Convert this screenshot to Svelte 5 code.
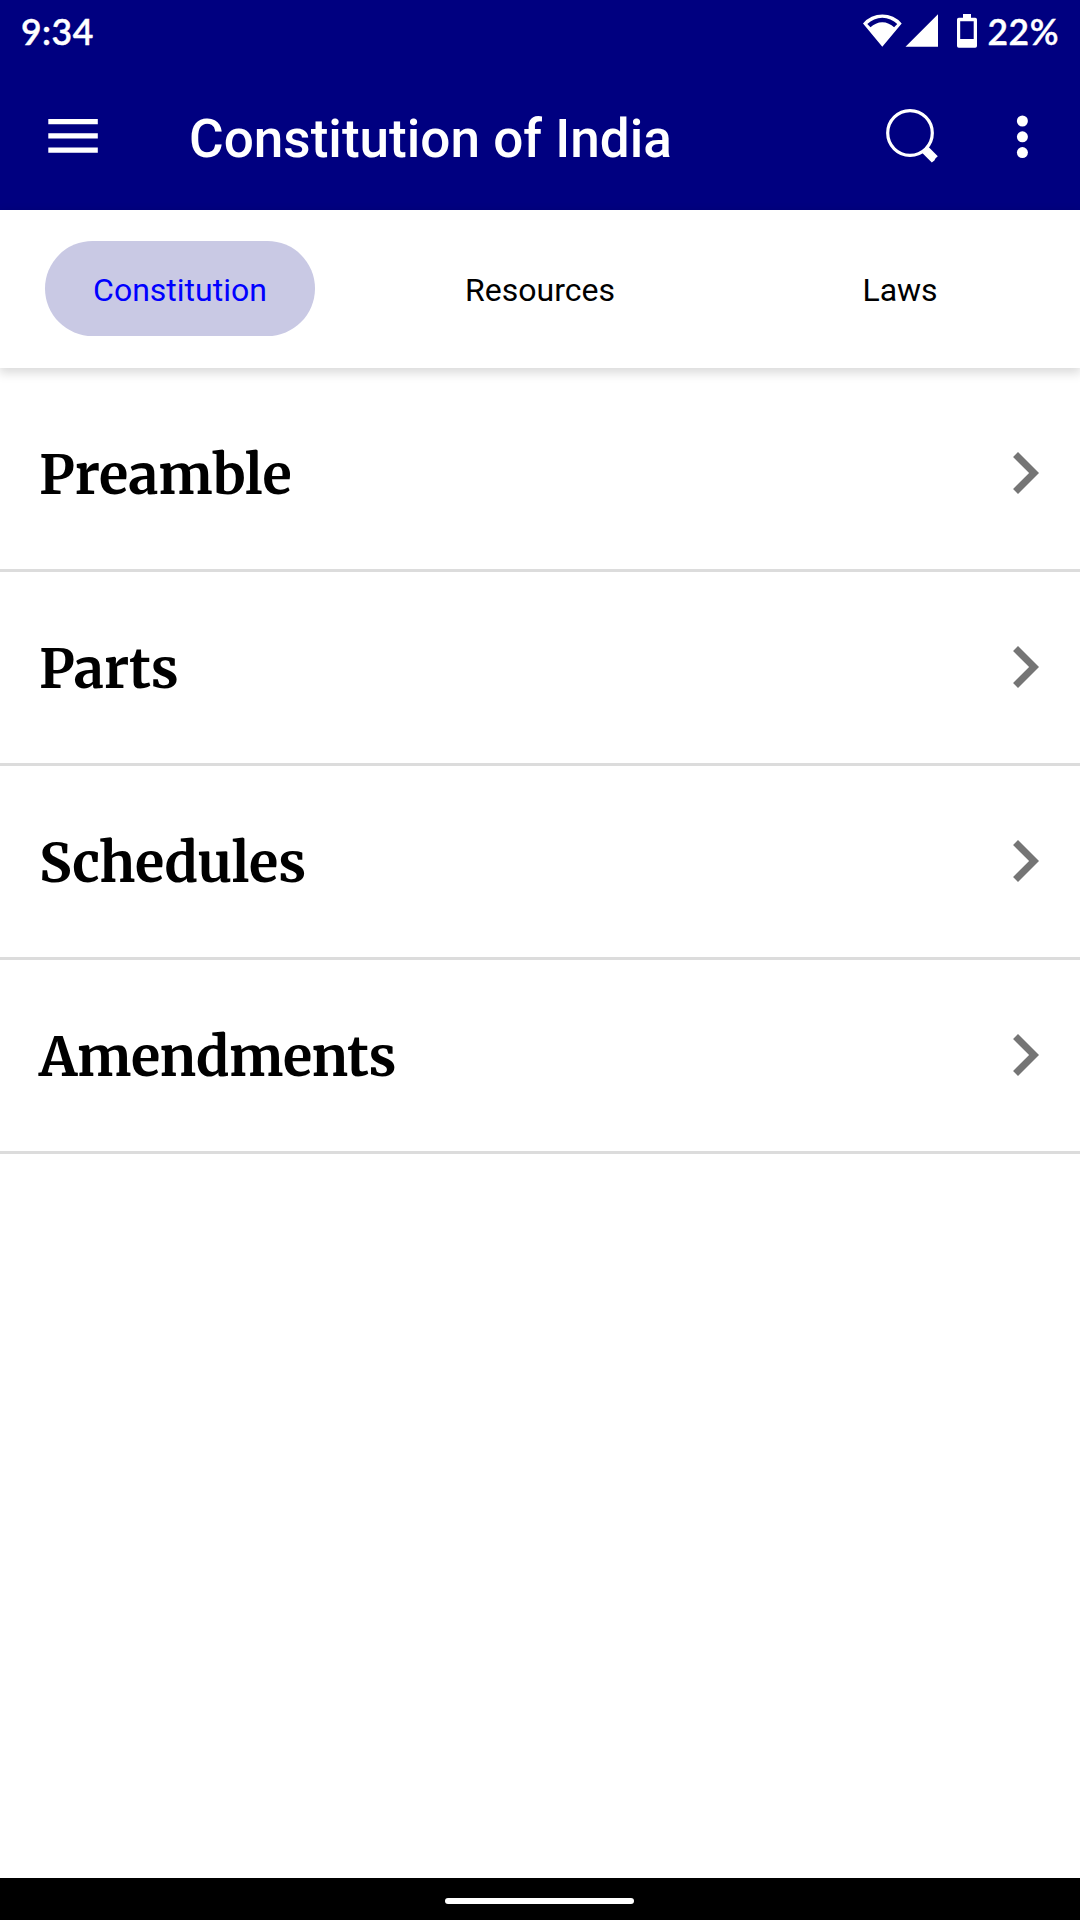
<script>
  let activeTab = 'Constitution';

  const tabs = ['Constitution', 'Resources', 'Laws'];

  const sections = [
    { id: 'preamble', title: 'Preamble' },
    { id: 'parts', title: 'Parts' },
    { id: 'schedules', title: 'Schedules' },
    { id: 'amendments', title: 'Amendments' }
  ];
</script>

<svelte:head>
  <title>Constitution of India</title>
</svelte:head>

<div class="screen">
  <header>
    <!-- Status bar -->
    <div class="status-bar">
      <span class="clock">9:34</span>
      <div class="status-icons">
        <svg width="44" height="44" viewBox="0 0 44 44">
          <path
            fill="#fff"
            fill-rule="evenodd"
            d="M3 13.4A25.3 25.3 0 0 1 41.7 13.4L22.3 36.8ZM7.3 13.9L10.5 17.3A16.5 16.5 0 0 1 34.1 17.3L37.3 13.9A21.5 21.5 0 0 0 7.3 13.9Z"
          />
        </svg>
        <svg width="36" height="44" viewBox="0 0 36 44">
          <path fill="#fff" d="M1.5 36.7H34V4.3Z" />
        </svg>
        <svg class="battery" width="26" height="44" viewBox="0 0 26 44">
          <path
            fill="#fff"
            fill-rule="evenodd"
            d="M9 4h8v3.7h4.2q1.8 0 1.8 1.8v26.4q0 1.8-1.8 1.8H4.8Q3 37.7 3 35.9V9.5Q3 7.7 4.8 7.7H9ZM6.2 11.2V29H19.7V11.2Z"
          />
        </svg>
        <span class="percent">22%</span>
      </div>
    </div>

    <!-- Toolbar -->
    <div class="toolbar">
      <button class="icon-btn menu" aria-label="Open menu">
        <svg width="50" height="34" viewBox="0 0 50 34">
          <path fill="#fff" d="M.3 0h49.5v5.3H.3zM.3 14.2h49.5v5.3H.3zM.3 28.4h49.5v5.3H.3z" />
        </svg>
      </button>
      <h1>Constitution of India</h1>
      <button class="icon-btn search" aria-label="Search">
        <svg width="54" height="56" viewBox="0 0 54 56">
          <circle cx="25" cy="25" r="22.3" fill="none" stroke="#fff" stroke-width="3.2" />
          <path fill="#fff" d="M36.3 44L42.6 38L52.8 48.2L50.4 50.4L49.4 52.4L46.8 54.6Z" />
        </svg>
      </button>
      <button class="icon-btn more" aria-label="More options">
        <svg width="12" height="44" viewBox="0 0 12 44">
          <circle cx="6.4" cy="6" r="5.5" fill="#fff" />
          <circle cx="6.4" cy="21.8" r="5.5" fill="#fff" />
          <circle cx="6.4" cy="37.6" r="5.5" fill="#fff" />
        </svg>
      </button>
    </div>
  </header>

  <nav class="tabs">
    {#each tabs as tab}
      <button
        class="tab {activeTab === tab ? 'active' : ''}"
        on:click={() => activeTab = tab}
      >
        {tab}
      </button>
    {/each}
  </nav>

  <main>
    {#each sections as section (section.id)}
      <button class="row">
        <span class="row-title {section.id}">{section.title}</span>
        <svg width="84" height="84" viewBox="0 0 24 24">
          <path fill="#757575" d="M10 6L8.59 7.41 13.17 12l-4.58 4.59L10 18l6-6z" />
        </svg>
      </button>
    {/each}
  </main>

  <div class="nav-bar">
    <div class="handle"></div>
  </div>
</div>

<style>
  :global(body) {
    margin: 0;
    background: #fff;
  }

  .screen {
    display: flex;
    flex-direction: column;
    height: 1920px;
    background: #fff;
    font-family: Roboto, sans-serif;
  }

  button {
    padding: 0;
    border: none;
    background: none;
    font: inherit;
    color: inherit;
    cursor: pointer;
  }

  svg {
    display: block;
    flex: none;
  }

  header {
    height: 210px;
    background: #000080;
    color: #fff;
  }

  .status-bar {
    display: flex;
    justify-content: space-between;
    box-sizing: border-box;
    height: 63px;
    padding: 10px 21px 0 21px;
    font-family: Lato, sans-serif;
    font-size: 35.5px;
    font-weight: 600;
    line-height: 44px;
    letter-spacing: 0.5px;
  }

  .clock,
  .percent {
    -webkit-text-stroke: 0.4px #fff;
  }

  .status-icons {
    display: flex;
  }

  .battery {
    margin-left: 14px;
  }

  .percent {
    margin-left: 8px;
  }

  .toolbar {
    display: flex;
    align-items: center;
    height: 147px;
  }

  .icon-btn {
    flex: none;
  }

  .menu {
    margin: 0 0 2px 48px;
  }

  h1 {
    flex: 1;
    margin: 0 0 0 91px;
    padding-top: 5px;
    font-size: 53.1px;
    font-weight: 500;
    line-height: 62px;
    white-space: nowrap;
  }

  .search {
    margin-bottom: 1px;
  }

  .more {
    margin: 0 52px 0 77px;
  }

  .tabs {
    display: grid;
    grid-template-columns: repeat(3, 1fr);
    align-items: start;
    justify-items: center;
    box-sizing: border-box;
    height: 158px;
    padding-top: 31px;
    box-shadow: 0 4px 10px 1px rgba(0, 0, 0, 0.15);
  }

  .tab {
    box-sizing: border-box;
    width: 270px;
    height: 95px;
    padding-top: 2px;
    border-radius: 48px;
    font-size: 32px;
    color: #000;
  }

  .tab.active {
    background: #c9c9e4;
    color: #0000ff;
  }

  main {
    flex: 1;
    padding-top: 10px;
  }

  .row {
    display: flex;
    align-items: center;
    justify-content: space-between;
    box-sizing: border-box;
    width: 100%;
    height: 194px;
    padding: 0 13px 2px 39px;
    border-bottom: 3px solid #dcdcdc;
    font-family: Merriweather, 'DejaVu Serif Condensed', 'DejaVu Serif', serif;
    font-size: 54px;
    font-weight: 700;
    line-height: 70px;
    color: #000;
  }

  .row-title {
    padding-top: 5px;
  }

  .preamble {
    letter-spacing: 0.1px;
  }

  .schedules {
    letter-spacing: -0.2px;
  }

  .amendments {
    letter-spacing: -0.35px;
  }

  .nav-bar {
    display: flex;
    align-items: center;
    justify-content: center;
    height: 42px;
    background: #000;
  }

  .handle {
    width: 189px;
    height: 6px;
    margin: 4px 1px 0 0;
    border-radius: 3px;
    background: #fff;
  }
</style>
